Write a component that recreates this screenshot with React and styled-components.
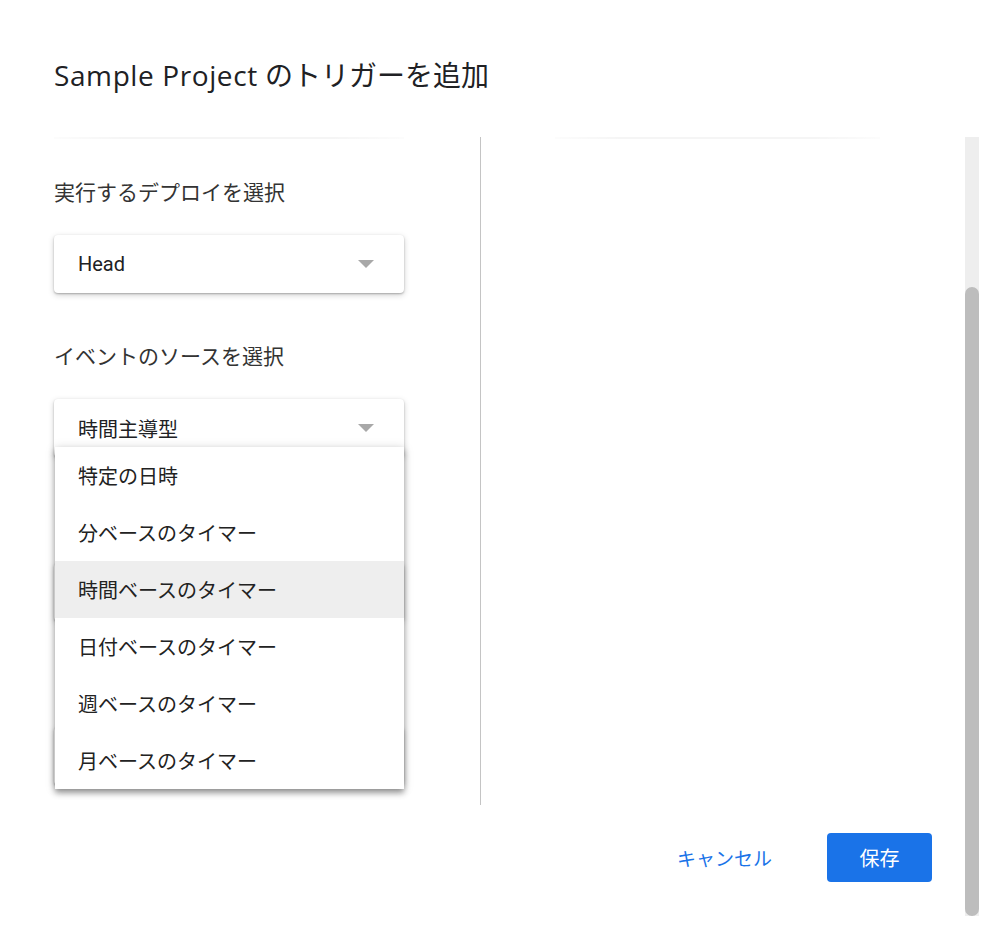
import styled, { createGlobalStyle } from "styled-components";

const GlobalStyle = createGlobalStyle`
  html, body {
    margin: 0;
    padding: 0;
    background: #ffffff;
  }
  body {
    font-family: Roboto, "Noto Sans CJK JP", sans-serif;
    color: #202124;
  }
`;

const Dialog = styled.div`
  width: 1000px;
  height: 938px;
  box-sizing: border-box;
  padding: 57px 21px 0 44px;
  display: flex;
  flex-direction: column;
  overflow: hidden;
`;

const Title = styled.h1`
  margin: 0;
  padding-left: 10px;
  height: 80px;
  font-family: "Open Sans", "Noto Sans CJK JP", sans-serif;
  font-size: 28px;
  font-weight: 400;
  line-height: 36px;
  color: #202124;
`;

const TitleName = styled.span`
  font-weight: 500;
  letter-spacing: 0.6px;
`;

const Content = styled.div`
  display: flex;
  height: 779px;
`;

const Main = styled.div`
  flex: 1;
  display: flex;
  flex-direction: column;
`;

const Body = styled.div`
  display: flex;
  height: 668px;
  padding-left: 10px;
  overflow: hidden;
`;

const LeftPane = styled.div`
  position: relative;
  width: 350px;
  padding-top: 40px;
  display: flex;
  flex-direction: column;
`;

const TopShade = styled.div`
  position: absolute;
  top: 0;
  left: ${(p) => p.$left}px;
  right: ${(p) => p.$right}px;
  height: 2px;
  background: linear-gradient(to right, rgba(0,0,0,0.01), rgba(0,0,0,0.04) 20%, rgba(0,0,0,0.04) 80%, rgba(0,0,0,0.01));
`;

const Divider = styled.div`
  width: 1px;
  margin-left: 76px;
  background: #c4c4c4;
`;

const RightPane = styled.div`
  position: relative;
  flex: 1;
`;

const Label = styled.div`
  height: 32px;
  font-size: 21px;
  line-height: 32px;
  color: #333333;
  margin-top: ${(p) => p.$gap || 0}px;
`;

const SelectWrap = styled.div`
  position: relative;
  margin-top: 26px;
`;

const SelectBox = styled.div`
  height: 58px;
  box-sizing: border-box;
  border-radius: 4px;
  background: #ffffff;
  box-shadow: 0 1px 2px rgba(0, 0, 0, 0.25), 0 2px 6px rgba(0, 0, 0, 0.18);
  display: flex;
  align-items: center;
  justify-content: space-between;
  padding: 0 30px 0 24px;
  font-size: 20px;
  color: #202124;
`;

const Arrow = styled.span`
  margin-left: auto;
  width: 0;
  height: 0;
  border-left: 8px solid transparent;
  border-right: 8px solid transparent;
  border-top: 8px solid #a8a8a8;
`;

const Menu = styled.ul`
  position: absolute;
  top: 48px;
  left: 1px;
  width: 349px;
  margin: 0;
  padding: 0;
  list-style: none;
  background: #ffffff;
  z-index: 2;
  box-shadow: 0 4px 6px rgba(0, 0, 0, 0.35), 0 1px 10px rgba(0, 0, 0, 0.15);
`;

const MenuItem = styled.li`
  height: 57px;
  display: flex;
  align-items: center;
  padding-left: 23px;
  font-size: 20px;
  color: #222222;
  background: ${(p) => (p.$active ? "#eeeeee" : "#ffffff")};
`;

const Footer = styled.div`
  flex: 1;
  display: flex;
  align-items: center;
  justify-content: flex-end;
  padding: 0 33px 6px 0;
`;

const TextButton = styled.button`
  border: none;
  background: none;
  padding: 0 12px;
  margin-right: 43px;
  height: 49px;
  font-family: inherit;
  font-size: 19px;
  color: #1a73e8;
`;

const PrimaryButton = styled.button`
  border: none;
  border-radius: 4px;
  width: 105px;
  height: 49px;
  background: #1a73e8;
  color: #ffffff;
  font-family: inherit;
  font-size: 20px;
`;

const Scrollbar = styled.div`
  width: 14px;
  height: 779px;
  display: flex;
  flex-direction: column;
  background: #eeeeee;
`;

const Thumb = styled.div`
  margin-top: 150px;
  flex: 1;
  background: #bdbdbd;
  border-radius: 7px;
`;

const options = [
  "特定の日時",
  "分ベースのタイマー",
  "時間ベースのタイマー",
  "日付ベースのタイマー",
  "週ベースのタイマー",
  "月ベースのタイマー",
];

export default function App() {
  return (
    <>
      <GlobalStyle />
      <Dialog>
        <Title>
          <TitleName>Sample Project</TitleName> のトリガーを追加
        </Title>
        <Content>
          <Main>
            <Body>
              <LeftPane>
                <TopShade $left={0} $right={0} />
                <Label>実行するデプロイを選択</Label>
                <SelectWrap>
                  <SelectBox>
                    Head
                    <Arrow />
                  </SelectBox>
                </SelectWrap>
                <Label $gap={48}>イベントのソースを選択</Label>
                <SelectWrap>
                  <SelectBox>
                    時間主導型
                    <Arrow />
                  </SelectBox>
                  <Menu>
                    {options.map((o, i) => (
                      <MenuItem key={o} $active={i === 2}>
                        {o}
                      </MenuItem>
                    ))}
                  </Menu>
                </SelectWrap>
                {/* fields hidden behind the open menu */}
                <Label $gap={48} />
                <SelectWrap>
                  <SelectBox />
                </SelectWrap>
                <Label $gap={48} />
                <SelectWrap>
                  <SelectBox />
                </SelectWrap>
              </LeftPane>
              <Divider />
              <RightPane>
                <TopShade $left={74} $right={85} />
              </RightPane>
            </Body>
            <Footer>
              <TextButton>キャンセル</TextButton>
              <PrimaryButton>保存</PrimaryButton>
            </Footer>
          </Main>
          <Scrollbar>
            <Thumb />
          </Scrollbar>
        </Content>
      </Dialog>
    </>
  );
}
